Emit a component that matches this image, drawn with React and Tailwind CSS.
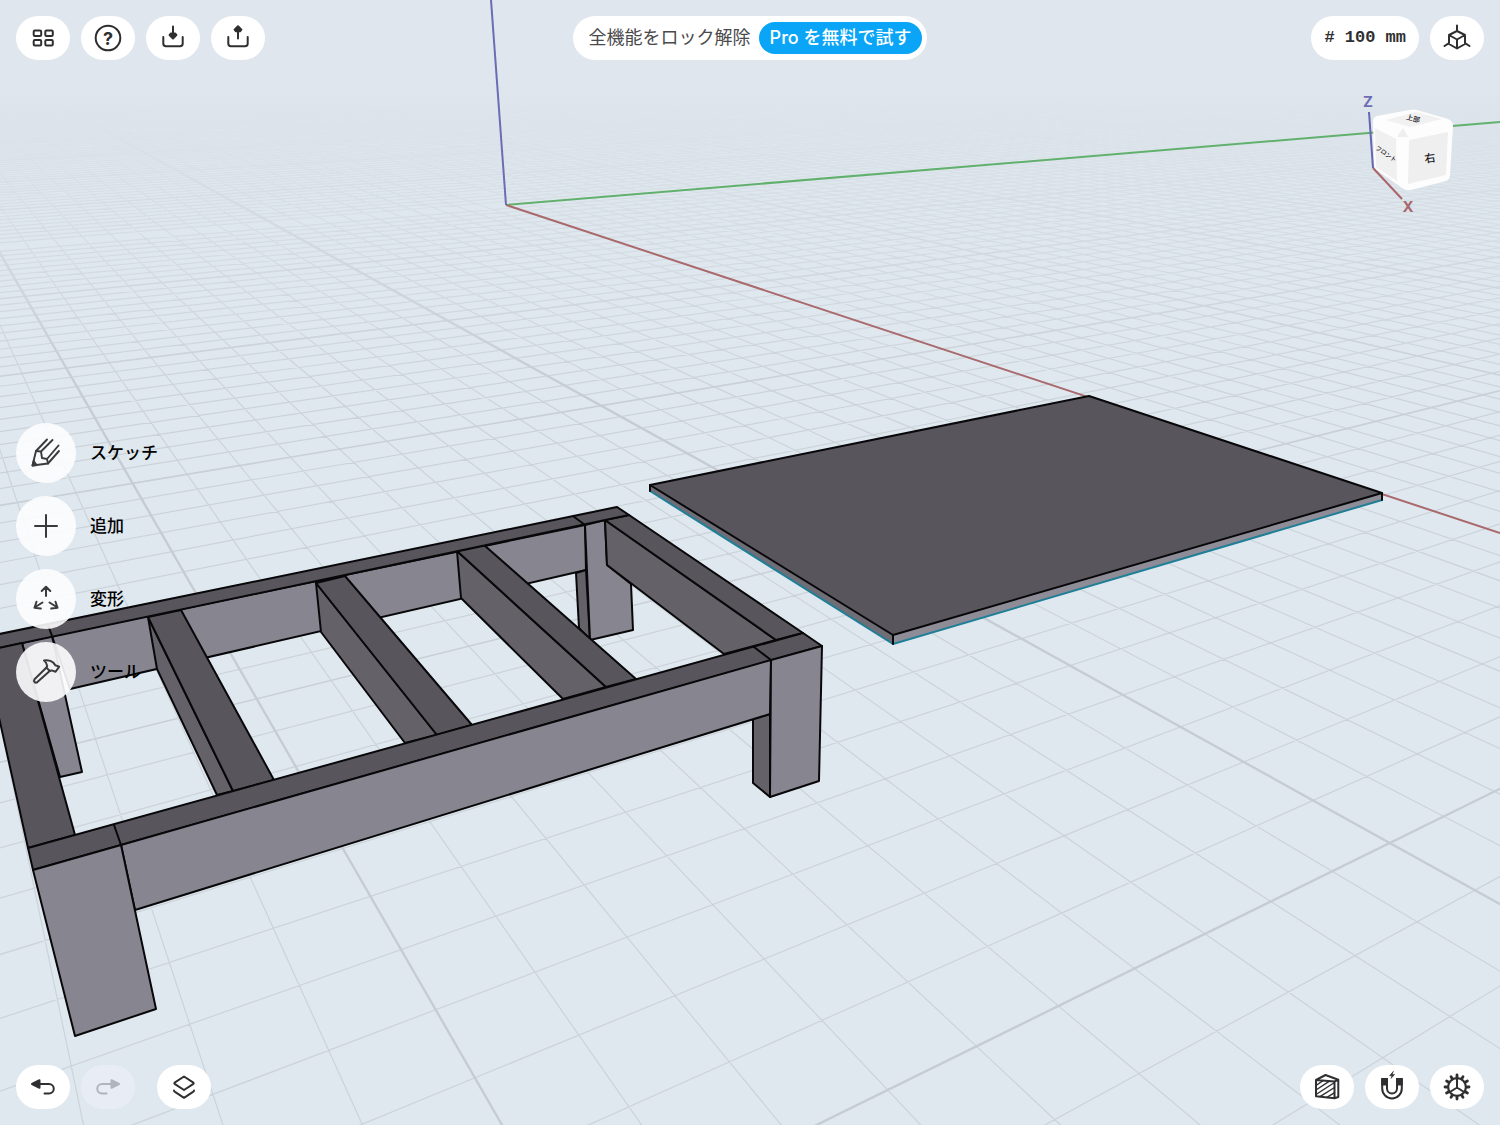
const JP = "font-['Inter','Noto_Sans_CJK_JP',sans-serif]";

/* Ground plane: a perspective grid. i counts lines along the green axis, j along the red one. */
const C_I = -0.03196;
const C_J = 0.05231;
const ORIGIN = [1389.8, 843];
const VANISH_I = [3132, -14];
const VANISH_J = [-152.8, -12.4];

function project(i, j) {
  const w = 1 + C_I * i + C_J * j;
  return [0, 1].map((k) => ((ORIGIN[k] + i * C_I * VANISH_I[k] + j * C_J * VANISH_J[k]) / w).toFixed(1));
}

function buildGrid() {
  let minor = "";
  let major = "";
  let distant = "";
  const segment = (a, b) => `M${a[0]} ${a[1]}L${b[0]} ${b[1]}`;
  for (let i = -220; i <= 70; i++) {
    if (i === -10) continue;
    const at = (w) => project(i, (w - 1 - C_I * i) / C_J);
    const d = segment(at(13), at(0.15));
    if (i === 0 || i === 10) major += d;
    else if (i % 10 === 0) distant += d;
    else minor += d;
  }
  for (let j = -30; j <= 170; j++) {
    if (j === 50) continue;
    const at = (w) => project((w - 1 - C_J * j) / C_I, j);
    const d = segment(at(13), at(0.15));
    if (j === 0) major += d;
    else if (j % 10 === 0) distant += d;
    else minor += d;
  }
  return { minor, major, distant };
}

const GRID = buildGrid();

const TOP = "#58565c";
const SIDE = "#646268";
const FACE = "#878690";

const FRAME = [
  [FACE, "52,636 585,525 586,570 70,689"],
  [SIDE, "576,573 586,570 590,640 579,628"],
  [FACE, "585,525 605,520 607,565 631,584 633,630 590,640"],
  [FACE, "22,643 52,636 82,772 60,777"],
  [SIDE, "148,617 157,669 217,795 233,791"],
  [TOP, "148,617 181,610 274,780 233,791"],
  [SIDE, "316,583 321,632 405,743 437,735"],
  [TOP, "316,583 345,576 472,725 437,735"],
  [SIDE, "457,551 461,598 563,699 606,687"],
  [TOP, "457,551 484,545 636,679 606,687"],
  [SIDE, "605,520 607,565 724,654 776,640"],
  [TOP, "605,520 629,515 803,633 776,640"],
  [TOP, "-20,638 617,507 629,515 -20,652"],
  [TOP, "-20,652 22,643 75,835 28,848 -20,632"],
  [TOP, "28,848 803,633 822,646 33,870"],
  [SIDE, "753,719 770,714 770,797 753,783"],
  [FACE, "121,845 771,660 770,714 135,910"],
  [FACE, "771,660 822,646 819,781 770,797"],
  [FACE, "33,870 121,845 156,1009 75,1036"],
];

function Scene() {
  return (
    <svg
      className="absolute inset-0 h-full w-full"
      viewBox="0 0 1500 1125"
      preserveAspectRatio="xMidYMid slice"
      aria-hidden="true"
    >
      <defs>
        <linearGradient id="haze" x1="0" y1="0" x2="0" y2="1">
          <stop offset="0" stopColor="#dfe6ed" />
          <stop offset="0.2" stopColor="#dfe6ed" />
          <stop offset="0.5" stopColor="#dfe7ee" stopOpacity="0.6" />
          <stop offset="1" stopColor="#e0e8ef" stopOpacity="0" />
        </linearGradient>
      </defs>
      <path d={GRID.minor} stroke="#cbd3d9" strokeWidth="1.2" fill="none" />
      <path d={GRID.distant} stroke="#c8cfd6" strokeWidth="1.6" fill="none" />
      <path d={GRID.major} stroke="#c6ccd3" strokeWidth="2.4" fill="none" />
      <rect x="0" y="0" width="1500" height="400" fill="url(#haze)" />
      <path d="M506 205L1500 122" stroke="#62b06e" strokeWidth="2" />
      <path d="M506 205L1500 533" stroke="#a9696d" strokeWidth="2" />
      <path d="M491 0L506 205" stroke="#6a6cb4" strokeWidth="2" />

      <g stroke="#08080a" strokeWidth="2" strokeLinejoin="round" strokeLinecap="round">
        {FRAME.map(([fill, points]) => (
          <polygon key={points} points={points} fill={fill} />
        ))}
        <path d="M48 625L52 636M573 516L585 525M114 825L121 845M754 647L771 660" fill="none" />
      </g>

      <g strokeLinejoin="round" strokeLinecap="round">
        <polygon points="650,485 650,491 893,644 893,635" fill="#6f6d75" />
        <polygon points="893,635 1382,493 1382,500 893,644" fill="#8e8d97" />
        <path d="M650 491L893 644L1382 500" fill="none" stroke="#1f7f96" strokeWidth="2" />
        <polygon points="650,485 1089,396 1382,493 893,635" fill={TOP} stroke="#08080a" strokeWidth="2" />
        <path d="M650 485V491M893 635V644M1382 493V500" stroke="#08080a" strokeWidth="2" />
      </g>
    </svg>
  );
}

function ViewCube() {
  return (
    <svg
      className="absolute right-0 top-[90px] h-[130px] w-[150px]"
      viewBox="1350 90 150 130"
      role="img"
      aria-label="ビューキューブ"
    >
      <path d="M1373 168L1402 199" stroke="#a9656a" strokeWidth="2" />
      <path
        d="M1377 116L1409 110Q1413 109 1417 110L1448 119Q1453 121 1453 126L1450 175Q1450 179 1446 181L1411 190Q1406 191 1402 188L1378 171Q1374 168 1374 164L1373 121Q1373 117 1377 116Z"
        fill="#fdfdfe"
      />
      <polygon points="1386,120 1416,112 1442,119 1410,127" fill="#f1f1f2" />
      <polygon points="1375,128 1396,139 1397,181 1376,167" fill="#f0f0f1" />
      <polygon points="1409,140 1448,132 1446,175 1408,184" fill="#efeff0" />
      <polygon points="1403,128 1408,137 1397,137" fill="#eeeeef" />
      <path d="M1369 112L1373 168" stroke="#6466b0" strokeWidth="2" />
      <g className={JP} fill="#18181a" textAnchor="middle">
        <text x="1430" y="162" fontSize="11" fontWeight="500" transform="rotate(-8 1430 158)">右</text>
        <text x="1386" y="156" fontSize="6" fontWeight="500" transform="rotate(34 1386 154)">フロント</text>
        <text x="1413" y="121" fontSize="7" fontWeight="500" transform="rotate(14 1413 119)">上部</text>
        <text x="1368" y="107" fontSize="15" fontWeight="700" fill="#6c6db4">Z</text>
        <text x="1408" y="212" fontSize="15" fontWeight="700" fill="#a8686c">X</text>
      </g>
    </svg>
  );
}

/* Icons share a 32px box with its origin in the middle. */
function Icon({ children, width = 2 }) {
  return (
    <svg
      className="size-8 shrink-0"
      viewBox="-16 -16 32 32"
      fill="none"
      stroke="currentColor"
      strokeWidth={width}
      strokeLinecap="round"
      strokeLinejoin="round"
      aria-hidden="true"
    >
      {children}
    </svg>
  );
}

const GridIcon = () => (
  <Icon>
    <rect x="-9.3" y="-7.5" width="7.5" height="5.5" rx="1.2" />
    <rect x="2.3" y="-7.5" width="7.5" height="5.5" rx="1.2" />
    <rect x="-9.3" y="2" width="7.5" height="5.5" rx="1.2" />
    <rect x="2.3" y="2" width="7.5" height="5.5" rx="1.2" />
  </Icon>
);

const HelpIcon = () => (
  <Icon>
    <circle r="12.3" />
    <text
      className="font-['Inter',sans-serif]"
      y="6.5"
      fontSize="18"
      fontWeight="700"
      textAnchor="middle"
      fill="currentColor"
      stroke="none"
    >
      ?
    </text>
  </Icon>
);

const ImportIcon = () => (
  <Icon>
    <path d="M-9.7 -1V5.5Q-9.7 8.3 -7 8.3H7Q9.7 8.3 9.7 5.5V-1M0 -11.5V-3" />
    <path d="M0 0.5L-3.4 -3L-2 -4.6H2L3.4 -3Z" fill="currentColor" />
  </Icon>
);

const ExportIcon = () => (
  <Icon>
    <path d="M-9.7 -1V5.5Q-9.7 8.3 -7 8.3H7Q9.7 8.3 9.7 5.5V-1M0 -8V0.5" />
    <path d="M0 -11.8L-3.4 -8.3L-2 -6.7H2L3.4 -8.3Z" fill="currentColor" />
  </Icon>
);

const AxesCubeIcon = () => (
  <Icon>
    <path d="M0 -7L8 -3V6L0 10.5L-8 6V-3ZM-8 -3L0 1.5L8 -3M0 1.5V10.5M0 -12.5V-7M-8 5.2L-12.5 8M8 5.2L12.5 8" />
  </Icon>
);

const SketchIcon = () => (
  <Icon width={1.9}>
    <path d="M1 -13.5L-10 -2L-13.5 12.5L2 10.5L13 -2" />
    <path d="M6.5 -13L-5 -1.5L-4 5L1 6L2 10.5M-10 -2L-5 -1.5M1 6L12.5 -7.5" />
    <path d="M-13.5 12.5L-12.3 8L-9.5 12Z" fill="currentColor" />
  </Icon>
);

const PlusIcon = () => (
  <Icon>
    <path d="M0 -11V11M-11 0H11" />
  </Icon>
);

const TransformIcon = () => (
  <Icon>
    <path d="M0 -3V-12M-4.3 -8L0 -12.3L4.3 -8" />
    <path d="M-3.5 3.5L-11.5 8.5M-9.5 2.8L-11.5 8.7L-5.2 9.6" />
    <path d="M3.5 3.5L11.5 8.5M9.5 2.8L11.5 8.7L5.2 9.6" />
  </Icon>
);

const HammerIcon = () => (
  <Icon>
    <path d="M0.5 -4.5L-11.5 7.3Q-12.6 8.8 -11.4 10.1Q-10 11.2 -8.6 10.1L4 -1.2" />
    <path d="M-2 -11.5Q4 -12.5 7.5 -9.2L9.2 -6.8L13.2 -5.4L9.6 -0.2L5.6 -1.6L3.8 -1L0.4 -4.4L1.2 -6.2Q0.8 -9.5 -2 -11.5Z" />
  </Icon>
);

const UndoIcon = () => (
  <Icon>
    <path d="M-3 -3H6A4.7 4.7 0 0 1 6 6.5H1.5" />
    <path d="M-11 -3L-3.5 -6.8V0.8Z" fill="currentColor" />
  </Icon>
);

const RedoIcon = () => (
  <Icon>
    <path d="M3 -3H-6A4.7 4.7 0 0 0 -6 6.5H-1.5" />
    <path d="M11 -3L3.5 -6.8V0.8Z" fill="currentColor" />
  </Icon>
);

const LayersIcon = () => (
  <Icon>
    <path d="M0 -10.5L9 -4.6Q10.3 -3.7 9 -2.8L0 3L-9 -2.8Q-10.3 -3.7 -9 -4.6Z" />
    <path d="M-10 3.4Q-10 4.2 -9 4.9L0 10.8L9 4.9Q10 4.2 10 3.4" />
  </Icon>
);

const SectionIcon = () => (
  <Icon>
    <path d="M-11 -7L7.5 -5.5V11.3L-11 9.3ZM-11 -7L-1.5 -12L11.3 -7.2L7.5 -5.5M11.3 -7.2V10L7.5 11.3" />
    <path
      d="M-11 -1.5L-4 -6.4M-11 3L2.5 -5.8M-11 7.5L7.5 -4.5M-7 9.6L7.5 0.5M0 10.4L7.5 5.6"
      strokeWidth="1.4"
    />
  </Icon>
);

const MagnetIcon = () => (
  <Icon>
    <path d="M-9.8 -8V1.6A9.8 9.8 0 0 0 9.8 1.6V-8M-5 -8V1.6A5 5 0 0 0 5 1.6V-8" />
    <path d="M-10.8 -9H-4V-1.5H-10.8ZM4 -9H10.8V-1.5H4Z" fill="currentColor" stroke="none" />
    <path d="M1.2 -15.4L-2.4 -11.3H0L-1 -8.6L2.6 -12.6H0.2Z" fill="currentColor" strokeWidth="0.6" />
  </Icon>
);

const TEETH = Array.from({ length: 12 }, (_, n) => n * 30);

const GearIcon = () => (
  <Icon>
    <circle r="8.9" strokeWidth="2.2" />
    {TEETH.map((angle) => (
      <path key={angle} d="M0 -9.5V-12" strokeWidth="2.8" transform={`rotate(${angle})`} />
    ))}
    <path d="M0 0.5V-8M0 0.5L-7 5M0 0.5L7 5" />
  </Icon>
);

function PillButton({ label, children, disabled, className = "bg-white text-[#2f2f31]" }) {
  return (
    <button
      type="button"
      aria-label={label}
      disabled={disabled}
      className={`flex h-11 w-[54px] items-center justify-center rounded-full ${className}`}
    >
      {children}
    </button>
  );
}

const TOOLS = [
  ["スケッチ", SketchIcon],
  ["追加", PlusIcon],
  ["変形", TransformIcon],
  ["ツール", HammerIcon],
];

export default function App() {
  return (
    <div className={`relative flex min-h-screen flex-col justify-between overflow-hidden bg-[#e0e8ef] ${JP}`} lang="ja">
      <Scene />
      <ViewCube />

      <header className="relative grid grid-cols-[1fr_auto_1fr] items-center p-4">
        <div className="flex gap-[11px]">
          <PillButton label="デザイン一覧"><GridIcon /></PillButton>
          <PillButton label="ヘルプ"><HelpIcon /></PillButton>
          <PillButton label="読み込み"><ImportIcon /></PillButton>
          <PillButton label="書き出し"><ExportIcon /></PillButton>
        </div>
        <div className="flex h-11 items-center gap-2 rounded-full bg-white pl-4 pr-[5px]">
          <span className="whitespace-nowrap text-[18px] leading-6 text-[#4a4a4c]">全機能をロック解除</span>
          <button type="button" className="h-8 whitespace-nowrap rounded-full bg-[#0aa5f7] px-[11px] text-[18px] font-medium leading-6 text-white">
            Pro を無料で試す
          </button>
        </div>
        <div className="flex justify-end gap-[11px]">
          <button
            type="button"
            className="h-11 whitespace-pre rounded-full bg-white px-[13px] font-['Liberation_Mono',monospace] text-[17px] font-bold leading-6 text-[#2f2f31]"
          >
            # 100 mm
          </button>
          <PillButton label="表示"><AxesCubeIcon /></PillButton>
        </div>
      </header>

      <nav className="relative flex flex-col items-start gap-[13px] px-4">
        {TOOLS.map(([label, ToolIcon]) => (
          <button key={label} type="button" className="flex items-center gap-[14px] text-[#3a3a3c]">
            <span className="flex size-[60px] items-center justify-center rounded-full bg-[#fdfdfe]/90">
              <ToolIcon />
            </span>
            <span className="text-[17px] font-medium leading-6 text-black">{label}</span>
          </button>
        ))}
      </nav>

      <footer className="relative flex items-center justify-between p-4">
        <div className="flex gap-[22px]">
          <div className="flex gap-[11px]">
            <PillButton label="元に戻す"><UndoIcon /></PillButton>
            <PillButton label="やり直す" disabled className="bg-[#e7ecf5] text-[#b0b4bc]"><RedoIcon /></PillButton>
          </div>
          <PillButton label="アイテム"><LayersIcon /></PillButton>
        </div>
        <div className="flex gap-[11px]">
          <PillButton label="断面表示"><SectionIcon /></PillButton>
          <PillButton label="スナップ"><MagnetIcon /></PillButton>
          <PillButton label="設定"><GearIcon /></PillButton>
        </div>
      </footer>
    </div>
  );
}
